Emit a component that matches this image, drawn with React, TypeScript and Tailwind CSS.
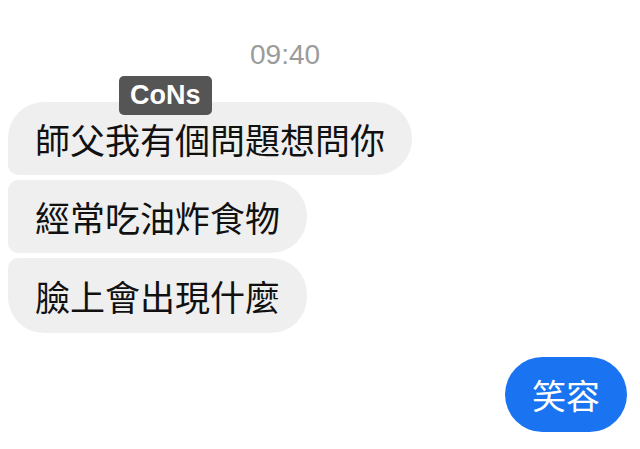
import React from 'react';

const cjk = { fontFamily: '"Noto Sans CJK TC", "Noto Sans", sans-serif' };

const App: React.FC = () => {
    return (
        <div className="w-[640px] h-[449px] bg-white overflow-hidden" style={cjk}>
            {/* Timestamp */}
            <div
                className="pt-[41px] pl-[250px] text-[28px] leading-[27px] text-[#9b9b9b]"
                style={{ fontFamily: '"Liberation Sans", Arial, sans-serif' }}
            >
                09:40
            </div>

            {/* Incoming messages */}
            <div className="mt-[34px] pl-2 flex flex-col items-start gap-[5px]">
                <div className="relative">
                    <div
                        className="absolute left-[111px] top-[-26px] h-[39px] px-[11px] rounded-[5px] bg-[#555555] text-white text-[27px] font-bold leading-[39px]"
                        style={{ fontFamily: '"Liberation Sans", Arial, sans-serif' }}
                    >
                        CoNs
                    </div>
                    <div className="h-[73px] px-[27px] bg-[#efefef] rounded-[36px] rounded-bl-[10px] text-[35px] leading-[73px] text-[#111] whitespace-nowrap">
                        師父我有個問題想問你
                    </div>
                </div>
                <div className="h-[73px] px-[27px] bg-[#efefef] rounded-[36px] rounded-l-[10px] text-[35px] leading-[73px] text-[#111] whitespace-nowrap">
                    經常吃油炸食物
                </div>
                <div className="h-[75px] px-[27px] bg-[#efefef] rounded-[36px] rounded-tl-[10px] text-[35px] leading-[75px] text-[#111] whitespace-nowrap">
                    臉上會出現什麼
                </div>
            </div>

            {/* Outgoing message */}
            <div className="mt-[24px] pr-[13px] flex justify-end">
                <div className="h-[75px] px-[27px] bg-[#1a73f0] rounded-full text-[34px] leading-[75px] text-white whitespace-nowrap">
                    笑容
                </div>
            </div>
        </div>
    );
};

export default App;
